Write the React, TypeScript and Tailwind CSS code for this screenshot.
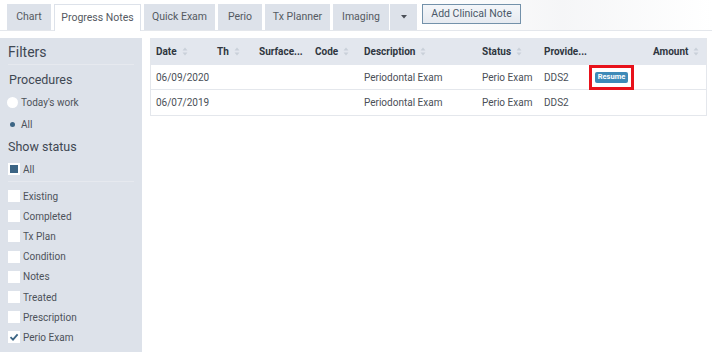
import React from "react";

const font = { fontFamily: "Roboto, 'Liberation Sans', sans-serif" };

function SortIcon() {
  return (
    <svg width="6" height="9" viewBox="0 0 6 9" className="ml-[5px] inline-block">
      <path d="M3 0.5 L5.5 3.5 L0.5 3.5 Z" fill="#c9d0d9" />
      <path d="M3 8.5 L5.5 5.5 L0.5 5.5 Z" fill="#c9d0d9" />
    </svg>
  );
}

function Checkbox({ state }: { state?: "fill" | "check" }) {
  return (
    <span className="w-[12px] h-[12px] bg-white flex items-center justify-center shrink-0">
      {state === "fill" && <span className="w-[8px] h-[8px] bg-[#3c6585]" />}
      {state === "check" && (
        <svg width="10" height="10" viewBox="0 0 10 10">
          <path d="M1.5 5.2 L4 7.6 L8.6 2.4" stroke="#3c6585" strokeWidth="1.8" fill="none" />
        </svg>
      )}
    </span>
  );
}

export default function App() {
  const tabs = ["Chart", "Progress Notes", "Quick Exam", "Perio", "Tx Planner", "Imaging"];
  const widths = [44, 87, 71, 44, 65, 56];
  const statuses = ["Existing", "Completed", "Tx Plan", "Condition", "Notes", "Treated", "Prescription"];
  return (
    <div className="w-[712px] h-[352px] bg-white overflow-hidden text-[#4d525a]" style={font}>
      {/* tab bar */}
      <div className="relative h-[31px] border-b border-[#e4e7ec] flex items-end pl-[7px]">
        <div className="absolute right-0 top-0 w-[300px] h-[30px] bg-gradient-to-l from-white via-[#f1f2f4] to-white opacity-70" />
        {tabs.map((t, i) => (
          <div
            key={t}
            style={{ width: widths[i] }}
            className={
              i === 1
                ? "relative h-[27px] mr-[3px] bg-white border border-b-0 border-[#dde2ea] flex items-center justify-center text-[10.5px] text-[#555a62] -mb-px"
                : "relative h-[26px] mr-[3px] bg-[#dde2ea] flex items-center justify-center text-[10.5px] text-[#555a62]"
            }
          >
            {t}
          </div>
        ))}
        <div className="relative h-[26px] w-[27px] bg-[#dde2ea] flex items-center justify-center mr-[5px] -ml-[2px]">
          <svg width="6" height="4" viewBox="0 0 6 4">
            <path d="M0 0 L6 0 L3 3.5 Z" fill="#4a4f57" />
          </svg>
        </div>
        <div className="relative self-start mt-[4px] h-[20px] w-[99px] border border-[#7391aa] bg-gradient-to-b from-[#f4f6f9] to-[#e6eaf0] flex items-center justify-center text-[10.5px] text-[#4a5868]">
          Add Clinical Note
        </div>
      </div>

      <div className="flex mt-[7px] h-[314px]">
        {/* sidebar */}
        <div className="w-[142px] bg-[#dde2ea] px-[8px] shrink-0">
          <div className="text-[14px] text-[#3f4853] h-[27px] pt-[2px] flex items-center border-b border-[#e6e9ef]">Filters</div>
          <div className="text-[12.5px] text-[#3f4853] h-[26px] pt-[4px] flex items-center pl-[1px]">Procedures</div>
          <div className="h-[22px] flex items-center text-[10px]">
            <span className="w-[11px] h-[11px] rounded-full bg-white mr-[3px] -ml-[1px]" />
            Today's work
          </div>
          <div className="h-[22px] flex items-center text-[10px]">
            <span className="w-[11px] h-[11px] flex items-center justify-center mr-[3px] -ml-[1px]">
              <span className="w-[5px] h-[5px] rounded-full bg-[#3c6585]" />
            </span>
            All
          </div>
          <div className="text-[12.5px] text-[#3f4853] h-[23px] pt-[1px] flex items-center">Show status</div>
          <div className="h-[24px] pb-[1px] flex items-center text-[10px] gap-[3px] border-b border-[#e6e9ef]">
            <Checkbox state="fill" />
            All
          </div>
          <div className="pt-[4px]">
            {statuses.map((s) => (
              <div key={s} className="h-[20.2px] flex items-center text-[10px] gap-[3px]">
                <Checkbox />
                {s}
              </div>
            ))}
            <div className="h-[20px] flex items-center text-[10px] gap-[3px]">
              <Checkbox state="check" />
              Perio Exam
            </div>
          </div>
        </div>

        {/* table */}
        <div className="ml-[8px] w-[557px]">
          <div className="border border-[#e4e7ec] border-t-0">
            <div className="h-[27px] bg-[#e3e7ee] flex items-center text-[10px] font-bold text-[#2f3640]">
              <div className="w-[61px] pl-[5px] flex items-center">Date<SortIcon /></div>
              <div className="w-[43px] pl-[5px] flex items-center">Th<SortIcon /></div>
              <div className="w-[55px] pl-[4px]">Surface...</div>
              <div className="w-[49px] pl-[5px] flex items-center">Code<SortIcon /></div>
              <div className="w-[118px] pl-[5px] flex items-center">Description<SortIcon /></div>
              <div className="w-[62px] pl-[5px] flex items-center">Status<SortIcon /></div>
              <div className="w-[110px] pl-[5px]">Provide...</div>
              <div className="flex items-center pl-[4px]">Amount<SortIcon /></div>
            </div>
            {[
              { d: "06/09/2020", r: true },
              { d: "06/07/2019", r: false },
            ].map((row, i) => (
              <div
                key={row.d}
                className={"h-[25px] flex items-center text-[10px] text-[#4a4f57] " + (i === 0 ? "border-b border-[#e4e7ec]" : "")}
              >
                <div className="w-[208px] pl-[5px]">{row.d}</div>
                <div className="w-[118px] pl-[5px]">Periodontal Exam</div>
                <div className="w-[62px] pl-[5px]">Perio Exam</div>
                <div className="w-[50px] pl-[5px]">DDS2</div>
                {row.r && (
                  <div className="w-[45px] h-[25px] border-[3px] border-[#e8121b] flex items-center justify-center">
                    <span className="h-[11px] px-[3px] bg-[#3d8ab8] rounded-[2px] text-white text-[7.5px] font-bold flex items-center leading-none">
                      Resume
                    </span>
                  </div>
                )}
              </div>
            ))}
          </div>
        </div>
      </div>
    </div>
  );
}
